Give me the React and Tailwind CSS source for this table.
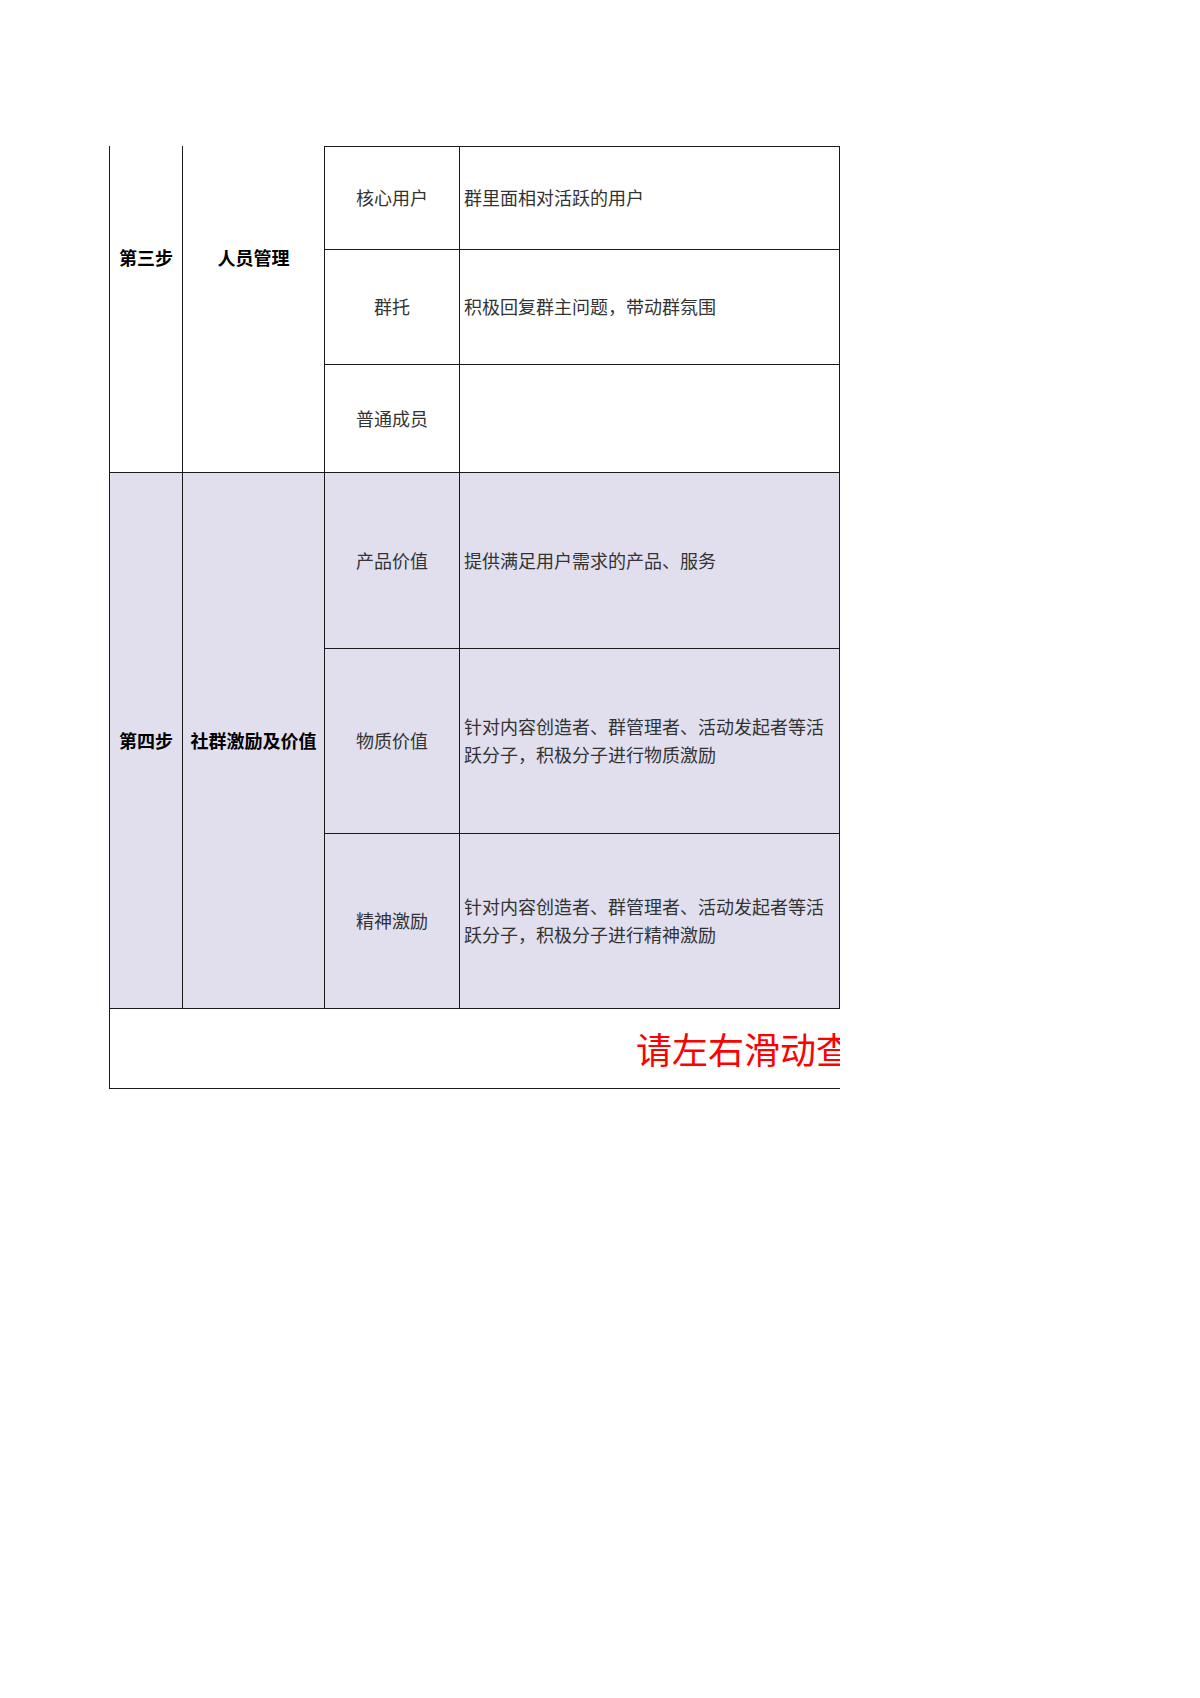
import React from "react";

const font = { fontFamily: '"Noto Sans CJK SC", "Noto Sans", sans-serif' };

const Label = ({ children, className = "" }) => (
  <div className={`flex items-center justify-center pb-[2px] text-[18px] leading-[28px] text-[#333] ${className}`}>
    {children}
  </div>
);

const Desc = ({ children, className = "" }) => (
  <div className={`flex items-center pl-[4px] pr-[2px] pb-[2px] text-[18px] leading-[28px] text-[#333] ${className}`}>
    <span>{children}</span>
  </div>
);

const App = () => {
  const step3 = [
    { name: "核心用户", desc: "群里面相对活跃的用户", h: "h-[104px]", top: true },
    { name: "群托", desc: "积极回复群主问题，带动群氛围", h: "h-[115px]" },
    { name: "普通成员", desc: "", h: "h-[108px]" },
  ];
  const step4 = [
    { name: "产品价值", desc: "提供满足用户需求的产品、服务", h: "h-[176px]" },
    { name: "物质价值", desc: "针对内容创造者、群管理者、活动发起者等活跃分子，积极分子进行物质激励", h: "h-[185px]" },
    { name: "精神激励", desc: "针对内容创造者、群管理者、活动发起者等活跃分子，积极分子进行精神激励", h: "h-[175px]" },
  ];

  return (
    <div className="min-h-screen bg-white" style={font}>
      <div className="pt-[146px] pl-[109px]">
        <div className="w-[731px] overflow-hidden border-l border-[#1a1a1a]">
          {/* 第三步 */}
          <div className="flex">
            <div className="w-[73px] shrink-0 border-r border-b border-[#1a1a1a] pt-[97px] text-center text-[18px] leading-[28px] font-bold text-black">
              第三步
            </div>
            <div className="w-[142px] shrink-0 border-r border-b border-[#1a1a1a] pt-[97px] text-center text-[18px] leading-[28px] font-bold text-black">
              人员管理
            </div>
            <div className="flex flex-col">
              {step3.map((r) => (
                <div key={r.name} className={`flex ${r.h} ${r.top ? "border-t" : ""} border-b border-[#1a1a1a]`}>
                  <Label className="w-[135px] shrink-0 border-r border-[#1a1a1a]">{r.name}</Label>
                  <Desc className="w-[380px] shrink-0 border-r border-[#1a1a1a]">{r.desc}</Desc>
                </div>
              ))}
            </div>
          </div>

          {/* 第四步 */}
          <div className="flex bg-[#e1dfed]">
            <div className="w-[73px] shrink-0 border-r border-b border-[#1a1a1a] flex items-center justify-center pb-[2px] text-[18px] leading-[28px] font-bold text-black">
              第四步
            </div>
            <div className="w-[142px] shrink-0 border-r border-b border-[#1a1a1a] flex items-center justify-center pb-[2px] text-[18px] leading-[28px] font-bold text-black whitespace-nowrap">
              社群激励及价值
            </div>
            <div className="flex flex-col">
              {step4.map((r) => (
                <div key={r.name} className={`flex ${r.h} border-b border-[#1a1a1a]`}>
                  <Label className="w-[135px] shrink-0 border-r border-[#1a1a1a]">{r.name}</Label>
                  <Desc className="w-[380px] shrink-0 border-r border-[#1a1a1a]">{r.desc}</Desc>
                </div>
              ))}
            </div>
          </div>

          {/* 提示 */}
          <div className="flex h-[80px] items-center border-b border-[#1a1a1a] pl-[526px] pb-[2px] whitespace-nowrap">
            <span className="text-[36px] leading-none text-[#ff0000]">请左右滑动查看更多内容</span>
          </div>
        </div>
      </div>
    </div>
  );
};

export default App;
